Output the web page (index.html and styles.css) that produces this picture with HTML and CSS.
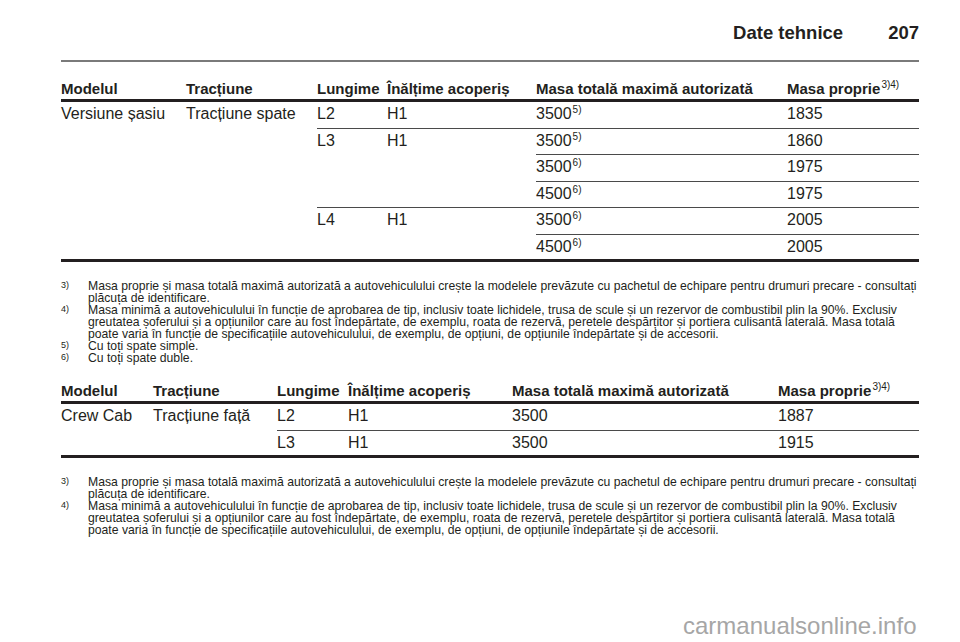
FILE: index.html
```html
<!DOCTYPE html>
<html lang="ro">
<head>
<meta charset="utf-8">
<title>Date tehnice 207</title>
<link rel="stylesheet" href="styles.css">
</head>
<body>
<div class="page">
  <header class="runhead">
    <span class="runhead-title">Date tehnice</span>
    <span class="runhead-num">207</span>
  </header>

  <table class="spec">
    <colgroup>
      <col class="a1"><col class="a2"><col class="a3"><col class="a4"><col class="a5"><col class="a6">
    </colgroup>
    <thead>
      <tr>
        <th>Modelul</th><th>Tracțiune</th><th>Lungime</th><th>Înălțime acoperiș</th><th>Masa totală maximă autorizată</th><th>Masa proprie<sup class="ref">3)4)</sup></th>
      </tr>
    </thead>
    <tbody>
      <tr>
        <td rowspan="6" class="nb">Versiune șasiu</td>
        <td rowspan="6" class="nb">Tracțiune spate</td>
        <td>L2</td><td>H1</td><td>3500<sup class="ref">5)</sup></td><td>1835</td>
      </tr>
      <tr>
        <td rowspan="3">L3</td><td rowspan="3">H1</td><td>3500<sup class="ref">5)</sup></td><td>1860</td>
      </tr>
      <tr><td>3500<sup class="ref">6)</sup></td><td>1975</td></tr>
      <tr><td>4500<sup class="ref">6)</sup></td><td>1975</td></tr>
      <tr>
        <td rowspan="2" class="nb">L4</td><td rowspan="2" class="nb">H1</td><td>3500<sup class="ref">6)</sup></td><td>2005</td>
      </tr>
      <tr class="end"><td>4500<sup class="ref">6)</sup></td><td>2005</td></tr>
    </tbody>
  </table>

  <div class="notes">
    <div class="note"><span class="note-mark">3)</span><p class="note-text">Masa proprie și masa totală maximă autorizată a autovehiculului crește la modelele prevăzute cu pachetul de echipare pentru drumuri precare - consultați<br>plăcuța de identificare.</p></div>
    <div class="note"><span class="note-mark">4)</span><p class="note-text">Masa minimă a autovehiculului în funcție de aprobarea de tip, inclusiv toate lichidele, trusa de scule și un rezervor de combustibil plin la 90%. Exclusiv<br>greutatea șoferului și a opțiunilor care au fost îndepărtate, de exemplu, roata de rezervă, peretele despărțitor și portiera culisantă laterală. Masa totală<br>poate varia în funcție de specificațiile autovehiculului, de exemplu, de opțiuni, de opțiunile îndepărtate și de accesorii.</p></div>
    <div class="note"><span class="note-mark">5)</span><p class="note-text">Cu toți spate simple.</p></div>
    <div class="note"><span class="note-mark">6)</span><p class="note-text">Cu toți spate duble.</p></div>
  </div>

  <table class="spec">
    <colgroup>
      <col class="b1"><col class="b2"><col class="b3"><col class="b4"><col class="b5"><col class="b6">
    </colgroup>
    <thead>
      <tr>
        <th>Modelul</th><th>Tracțiune</th><th>Lungime</th><th>Înălțime acoperiș</th><th>Masa totală maximă autorizată</th><th>Masa proprie<sup class="ref">3)4)</sup></th>
      </tr>
    </thead>
    <tbody>
      <tr>
        <td rowspan="2" class="nb">Crew Cab</td>
        <td rowspan="2" class="nb">Tracțiune față</td>
        <td>L2</td><td>H1</td><td>3500</td><td>1887</td>
      </tr>
      <tr class="end"><td>L3</td><td>H1</td><td>3500</td><td>1915</td></tr>
    </tbody>
  </table>

  <div class="notes">
    <div class="note"><span class="note-mark">3)</span><p class="note-text">Masa proprie și masa totală maximă autorizată a autovehiculului crește la modelele prevăzute cu pachetul de echipare pentru drumuri precare - consultați<br>plăcuța de identificare.</p></div>
    <div class="note"><span class="note-mark">4)</span><p class="note-text">Masa minimă a autovehiculului în funcție de aprobarea de tip, inclusiv toate lichidele, trusa de scule și un rezervor de combustibil plin la 90%. Exclusiv<br>greutatea șoferului și a opțiunilor care au fost îndepărtate, de exemplu, roata de rezervă, peretele despărțitor și portiera culisantă laterală. Masa totală<br>poate varia în funcție de specificațiile autovehiculului, de exemplu, de opțiuni, de opțiunile îndepărtate și de accesorii.</p></div>
  </div>

  <div class="watermark">carmanualsonline.info</div>
</div>
</body>
</html>
```

FILE: styles.css
```css
html, body {
  margin: 0;
  padding: 0;
  background: #ffffff;
}

body {
  font-family: "Liberation Sans", Arial, Helvetica, sans-serif;
  color: #231f20;
}

.page {
  position: relative;
  width: 960px;
  min-height: 642px;
  box-sizing: border-box;
  padding: 0 41px 0 61px;
  overflow: hidden;
}

/* running head */
.runhead {
  display: flex;
  justify-content: flex-end;
  align-items: baseline;
  gap: 45px;
  padding: 22px 0 16px;
  border-bottom: 2px solid #7a7a7a;
  font-size: 18.5px;
  line-height: 22px;
  font-weight: bold;
}

/* tables */
.spec {
  width: 858px;
  table-layout: fixed;
  border-collapse: separate;
  border-spacing: 0;
  border-bottom: 3px solid #231f20;
}

.a1 { width: 125px; }
.a2 { width: 131px; }
.a3 { width: 70px; }
.a4 { width: 149px; }
.a5 { width: 251px; }
.a6 { width: 132px; }

.b1 { width: 92px; }
.b2 { width: 124px; }
.b3 { width: 71px; }
.b4 { width: 164px; }
.b5 { width: 266px; }
.b6 { width: 141px; }

.spec th {
  text-align: left;
  font-size: 15px;
  line-height: 18px;
  font-weight: bold;
  padding: 18px 0 1px;
  border-bottom: 3px solid #231f20;
  white-space: nowrap;
  vertical-align: bottom;
}

.spec td {
  text-align: left;
  font-size: 16px;
  line-height: 18px;
  padding: 3px 0 4.5px;
  border-bottom: 1px solid #4a4a4a;
  vertical-align: top;
  white-space: nowrap;
}

.spec td.nb,
.spec tr.end td {
  border-bottom: 0;
}

.spec tr.end td {
  padding-bottom: 3.5px;
}

.ref {
  font-size: 10px;
  font-weight: normal;
  line-height: 0;
  vertical-align: 6px;
  margin-left: 1px;
}

/* footnotes */
.notes {
  margin-top: 18px;
  font-size: 12.2px;
  line-height: 12px;
}

.note {
  display: grid;
  grid-template-columns: 27px 1fr;
}

.note-mark {
  font-size: 9px;
  line-height: 12px;
  position: relative;
  top: -1px;
}

.note-text {
  margin: 0;
  white-space: nowrap;
}

/* watermark overlay */
.watermark {
  position: absolute;
  left: 683px;
  top: 612px;
  font-family: "Liberation Sans", Arial, sans-serif;
  font-size: 24px;
  line-height: 28px;
  color: #a6a6a6;
  white-space: nowrap;
}
```
